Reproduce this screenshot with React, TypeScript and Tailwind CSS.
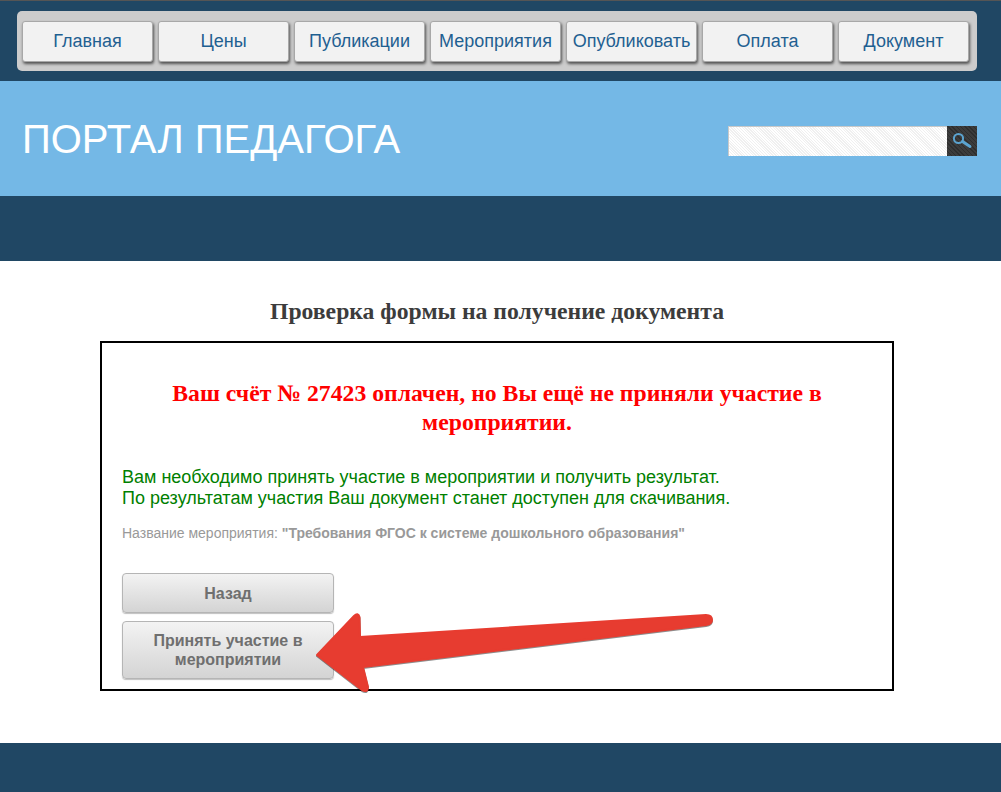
const navItems = ['Главная', 'Цены', 'Публикации', 'Мероприятия', 'Опубликовать', 'Оплата', 'Документ']

function NavButton({ label }: { label: string }) {
  return (
    <a className="flex h-[41px] w-[131px] items-center justify-center whitespace-nowrap rounded-[3px] border border-[#a8a8a8] bg-[#f2f2f2] text-[18px] text-[#1f6091] shadow-[1px_2px_3px_rgba(0,0,0,0.6)]">
      {label}
    </a>
  )
}

function ActionButton({ children, tall }: { children: React.ReactNode; tall?: boolean }) {
  return (
    <button
      className={`block w-[212px] rounded-[4px] border border-[#b5b5b5] bg-gradient-to-b from-[#f3f3f3] to-[#d4d4d4] px-4 text-center text-[16px] font-bold leading-[19px] text-[#6f6f6f] shadow-[0_1px_1px_rgba(0,0,0,0.25)] ${tall ? 'h-[58px]' : 'h-[40px]'}`}
    >
      {children}
    </button>
  )
}

function SearchBox() {
  return (
    <div className="flex h-[30px] w-[249px]">
      <div className="flex-1 border-t border-l border-[#c9c9c9] bg-[#f6f6f6] bg-[repeating-linear-gradient(45deg,#ffffff_0px,#ffffff_1px,#f0f0f0_1px,#f0f0f0_2px)]" />
      <div className="flex w-[30px] items-center justify-center bg-[#333333] bg-[repeating-linear-gradient(45deg,#2e2e2e_0px,#2e2e2e_1px,#3c3c3c_1px,#3c3c3c_3px)]">
        <svg width="22" height="18" viewBox="0 0 22 18" fill="none">
          <circle cx="7.5" cy="6.5" r="4.6" stroke="#5ba3cf" strokeWidth="2" />
          <path d="M11.5 9.5 L19 14.5" stroke="#5ba3cf" strokeWidth="3" strokeLinecap="round" />
        </svg>
      </div>
    </div>
  )
}

export default function App() {
  return (
    <div className="h-[792px] overflow-hidden bg-white font-['Liberation_Sans',Arial,sans-serif]">
      <div className="h-[81px] border-t border-[#555555] bg-[#204764] px-[17px] pt-[10px]">
        <nav className="flex h-[60px] w-[960px] items-start gap-[5px] rounded-[5px] bg-[#cccccc] pl-[5px] pr-[6px] pt-[10px]">
          {navItems.map(item => (
            <NavButton key={item} label={item} />
          ))}
        </nav>
      </div>

      <header className="flex h-[115px] items-center justify-between bg-[#74b8e6] pl-[22px] pr-[24px]">
        <h1 className="text-[40px] leading-none text-white">ПОРТАЛ ПЕДАГОГА</h1>
        <div className="pt-[5px]">
          <SearchBox />
        </div>
      </header>

      <div className="h-[65px] bg-[#204764]" />

      <main className="h-[482px] pt-[36px]">
        <h2 className="ml-[-7px] text-center font-['Liberation_Serif',serif] text-[23.7px] font-bold leading-[28px] text-[#3c3c3c]">
          Проверка формы на получение документа
        </h2>
        <div className="relative ml-[100px] mt-[16px] h-[350px] w-[794px] border-2 border-black px-[20px] pt-[36px]">
          <p className="text-center font-['Liberation_Serif',serif] text-[23.7px] font-bold leading-[29px] text-[#ff0000]">
            Ваш счёт № 27423 оплачен, но Вы ещё не приняли участие в мероприятии.
          </p>
          <p className="mt-[30px] text-[18px] leading-[21px] text-[#008000]">
            Вам необходимо принять участие в мероприятии и получить результат.
            <br />
            По результатам участия Ваш документ станет доступен для скачивания.
          </p>
          <p className="mt-[16px] text-[14px] leading-[16px] text-[#999999]">
            Название мероприятия: <b>"Требования ФГОС к системе дошкольного образования"</b>
          </p>
          <div className="mt-[32px] flex flex-col gap-[8px]">
            <ActionButton>Назад</ActionButton>
            <ActionButton tall>Принять участие в мероприятии</ActionButton>
          </div>
          {/* red annotation arrow drawn over the box */}
          <svg
            className="absolute left-[198px] top-[250px] overflow-visible"
            width="420"
            height="100"
            viewBox="300 590 420 100"
            fill="none"
          >
            <path
              d="M317 652 L354 613 Q358 609 359.500 614 L360 634 L706 612 Q712 612 712 617 Q712 621 706 622 L363 664 L368 684 Q368 690 362 687 Z"
              fill="#e73c30"
              stroke="#e73c30"
              strokeWidth="2"
              strokeLinejoin="round"
              style={{ filter: 'drop-shadow(0.5px 1.5px 0.7px rgba(0,0,0,0.45))' }}
            />
          </svg>
        </div>
      </main>

      <div className="h-[49px] bg-[#204764]" />
    </div>
  )
}
